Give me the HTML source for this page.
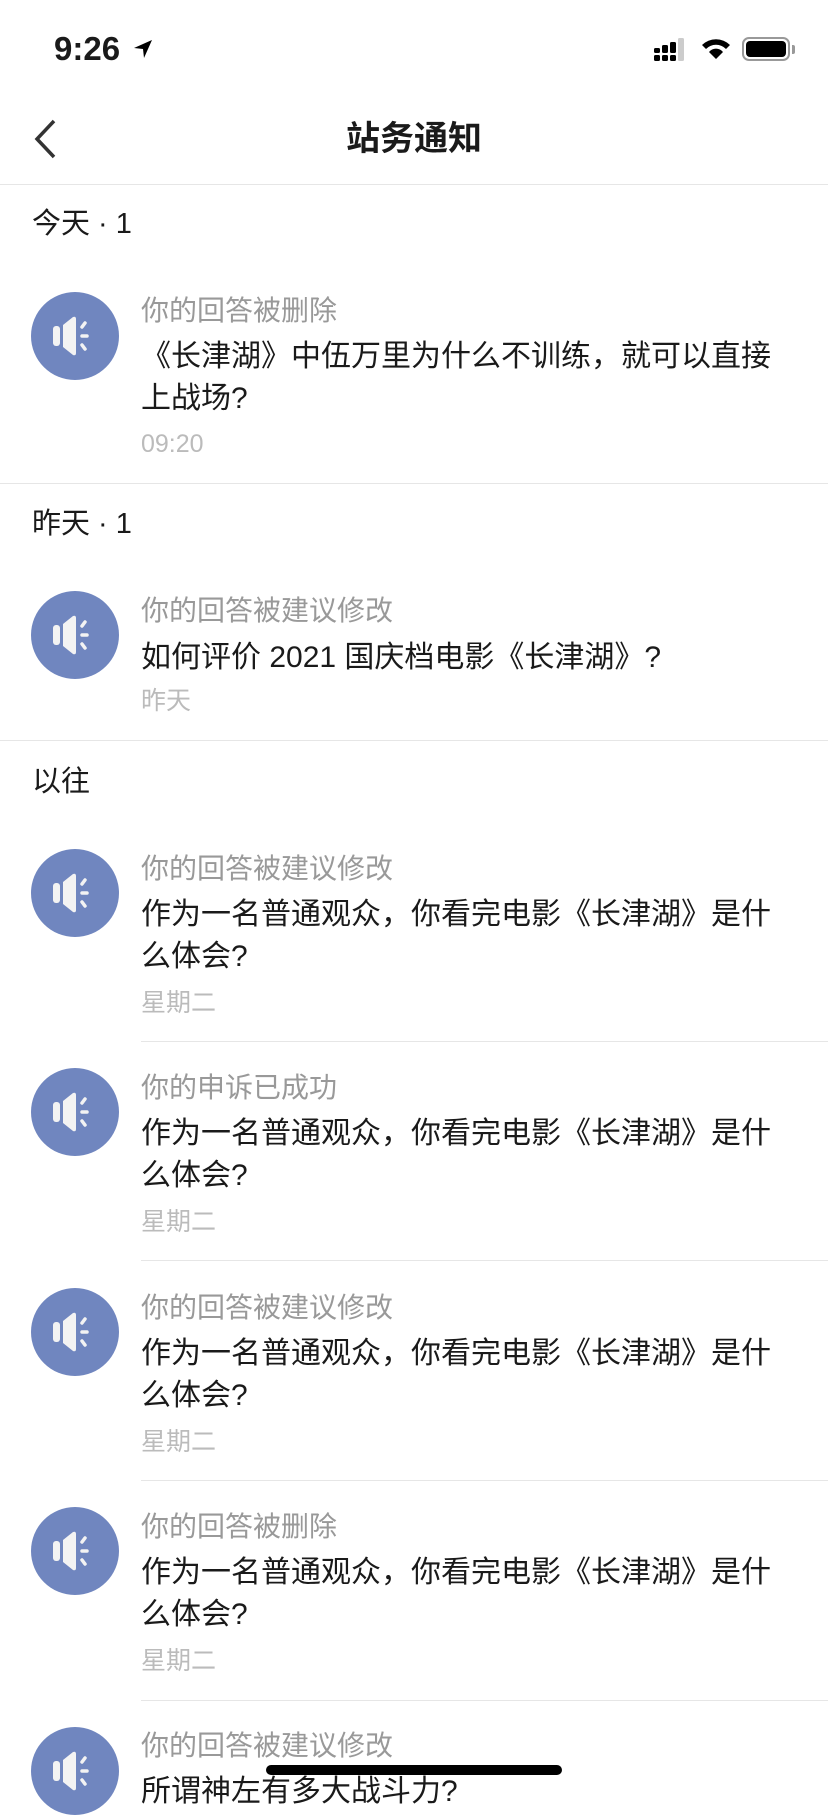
<!DOCTYPE html>
<html><head><meta charset="utf-8"><style>
*{margin:0;padding:0;box-sizing:border-box}
body{width:828px;height:1792px;background:#fff;position:relative;overflow:hidden;font-family:"Liberation Sans","Noto Sans CJK SC",sans-serif;color:#1a1a1a}
.a{position:absolute;white-space:nowrap}
.t{line-height:40px;height:40px}
.g{color:#999;font-size:28px}
.b{font-size:30px;color:#1a1a1a}
.tm{color:#bbb;font-size:25px}
.h{font-size:29px;left:32px}
.sep{position:absolute;height:1px;background:#e6e6e6;right:0}
.av{position:absolute;left:31px;width:88px;height:88px;border-radius:50%;background:#7086bf}
</style></head><body>
<div class="a" style="left:54px;top:28px;font-size:33px;font-weight:bold;line-height:42px">9:26</div>
<svg class="a" style="left:132px;top:38px" width="22" height="22" viewBox="0 0 22 22"><path d="M20 2 L2 10 L11 11 L12 20 Z" fill="#000"/></svg>
<svg class="a" style="left:654px;top:38px" width="34" height="24" viewBox="0 0 34 24"><rect x="0" y="10" width="6" height="5" rx="1.5"/><rect x="0" y="17" width="6" height="6" rx="1.5"/><rect x="8" y="7" width="6" height="8" rx="1.5"/><rect x="8" y="17" width="6" height="6" rx="1.5"/><rect x="16" y="4" width="6" height="11" rx="1.5"/><rect x="16" y="17" width="6" height="6" rx="1.5"/><rect x="24" y="0" width="6" height="23" rx="1.5" fill="#ccc"/></svg>
<svg class="a" style="left:700px;top:37px" width="32" height="24" viewBox="0 0 32 24"><path d="M2 8 A20 20 0 0 1 30 8 L26 12 A14 14 0 0 0 6 12Z M9 15 A9 9 0 0 1 23 15 L16 22Z"/></svg>
<div class="a" style="left:742px;top:37px;width:48px;height:24px;border:2px solid #999;border-radius:7px"></div>
<div class="a" style="left:746px;top:41px;width:40px;height:16px;background:#000;border-radius:4px"></div>
<div class="a" style="left:792px;top:45px;width:3px;height:9px;background:#999;border-radius:0 2px 2px 0"></div>
<svg class="a" style="left:32px;top:118px" width="26" height="42" viewBox="0 0 26 42"><path d="M22 3 L5 21 L22 39" fill="none" stroke="#333" stroke-width="3.5"/></svg>
<div class="a" style="left:0;width:828px;text-align:center;top:117px;font-size:34px;font-weight:bold;line-height:44px">站务通知</div>
<div class="sep" style="left:0;top:184px"></div>

<div class="a t h" style="top:204px">今天 · 1</div>
<div class="av" style="top:292px"><svg width="88" height="88" viewBox="0 0 88 88"><rect x="22" y="34" width="7" height="20" rx="3" fill="#f3f3f3"/><path d="M32 33 L42 25 Q45 24 45 27 L45 61 Q45 64 42 63 L32 55Z" fill="#f3f3f3"/><path d="M51 35 L54 31 M51 44 L56 44 M51 53 L54 57" stroke="#f3f3f3" stroke-width="3.5" stroke-linecap="round"/></svg></div>
<div class="a t g" style="left:141px;top:291px">你的回答被删除</div>
<div class="a t b" style="left:141px;top:337px">《长津湖》中伍万里为什么不训练，就可以直接</div>
<div class="a t b" style="left:141px;top:379px">上战场?</div>
<div class="a t tm" style="left:141px;top:424px">09:20</div>
<div class="sep" style="left:0;top:483px"></div>

<div class="a t h" style="top:504px">昨天 · 1</div>
<div class="av" style="top:591px"><svg width="88" height="88" viewBox="0 0 88 88"><rect x="22" y="34" width="7" height="20" rx="3" fill="#f3f3f3"/><path d="M32 33 L42 25 Q45 24 45 27 L45 61 Q45 64 42 63 L32 55Z" fill="#f3f3f3"/><path d="M51 35 L54 31 M51 44 L56 44 M51 53 L54 57" stroke="#f3f3f3" stroke-width="3.5" stroke-linecap="round"/></svg></div>
<div class="a t g" style="left:141px;top:591px">你的回答被建议修改</div>
<div class="a t b" style="left:141px;top:638px">如何评价 2021 国庆档电影《长津湖》?</div>
<div class="a t tm" style="left:141px;top:681px">昨天</div>
<div class="sep" style="left:0;top:740px"></div>

<div class="a t h" style="top:762px">以往</div>

<div class="av" style="top:849px"><svg width="88" height="88" viewBox="0 0 88 88"><rect x="22" y="34" width="7" height="20" rx="3" fill="#f3f3f3"/><path d="M32 33 L42 25 Q45 24 45 27 L45 61 Q45 64 42 63 L32 55Z" fill="#f3f3f3"/><path d="M51 35 L54 31 M51 44 L56 44 M51 53 L54 57" stroke="#f3f3f3" stroke-width="3.5" stroke-linecap="round"/></svg></div>
<div class="a t g" style="left:141px;top:849px">你的回答被建议修改</div>
<div class="a t b" style="left:141px;top:895px">作为一名普通观众，你看完电影《长津湖》是什</div>
<div class="a t b" style="left:141px;top:937px">么体会?</div>
<div class="a t tm" style="left:141px;top:983px">星期二</div>
<div class="sep" style="left:141px;top:1041px"></div>

<div class="av" style="top:1068px"><svg width="88" height="88" viewBox="0 0 88 88"><rect x="22" y="34" width="7" height="20" rx="3" fill="#f3f3f3"/><path d="M32 33 L42 25 Q45 24 45 27 L45 61 Q45 64 42 63 L32 55Z" fill="#f3f3f3"/><path d="M51 35 L54 31 M51 44 L56 44 M51 53 L54 57" stroke="#f3f3f3" stroke-width="3.5" stroke-linecap="round"/></svg></div>
<div class="a t g" style="left:141px;top:1068px">你的申诉已成功</div>
<div class="a t b" style="left:141px;top:1114px">作为一名普通观众，你看完电影《长津湖》是什</div>
<div class="a t b" style="left:141px;top:1156px">么体会?</div>
<div class="a t tm" style="left:141px;top:1202px">星期二</div>
<div class="sep" style="left:141px;top:1260px"></div>

<div class="av" style="top:1288px"><svg width="88" height="88" viewBox="0 0 88 88"><rect x="22" y="34" width="7" height="20" rx="3" fill="#f3f3f3"/><path d="M32 33 L42 25 Q45 24 45 27 L45 61 Q45 64 42 63 L32 55Z" fill="#f3f3f3"/><path d="M51 35 L54 31 M51 44 L56 44 M51 53 L54 57" stroke="#f3f3f3" stroke-width="3.5" stroke-linecap="round"/></svg></div>
<div class="a t g" style="left:141px;top:1288px">你的回答被建议修改</div>
<div class="a t b" style="left:141px;top:1334px">作为一名普通观众，你看完电影《长津湖》是什</div>
<div class="a t b" style="left:141px;top:1376px">么体会?</div>
<div class="a t tm" style="left:141px;top:1422px">星期二</div>
<div class="sep" style="left:141px;top:1480px"></div>

<div class="av" style="top:1507px"><svg width="88" height="88" viewBox="0 0 88 88"><rect x="22" y="34" width="7" height="20" rx="3" fill="#f3f3f3"/><path d="M32 33 L42 25 Q45 24 45 27 L45 61 Q45 64 42 63 L32 55Z" fill="#f3f3f3"/><path d="M51 35 L54 31 M51 44 L56 44 M51 53 L54 57" stroke="#f3f3f3" stroke-width="3.5" stroke-linecap="round"/></svg></div>
<div class="a t g" style="left:141px;top:1507px">你的回答被删除</div>
<div class="a t b" style="left:141px;top:1553px">作为一名普通观众，你看完电影《长津湖》是什</div>
<div class="a t b" style="left:141px;top:1595px">么体会?</div>
<div class="a t tm" style="left:141px;top:1641px">星期二</div>
<div class="sep" style="left:141px;top:1700px"></div>

<div class="av" style="top:1727px"><svg width="88" height="88" viewBox="0 0 88 88"><rect x="22" y="34" width="7" height="20" rx="3" fill="#f3f3f3"/><path d="M32 33 L42 25 Q45 24 45 27 L45 61 Q45 64 42 63 L32 55Z" fill="#f3f3f3"/><path d="M51 35 L54 31 M51 44 L56 44 M51 53 L54 57" stroke="#f3f3f3" stroke-width="3.5" stroke-linecap="round"/></svg></div>
<div class="a t g" style="left:141px;top:1726px">你的回答被建议修改</div>
<div class="a t b" style="left:141px;top:1772px">所谓神左有多大战斗力?</div>
<div class="a" style="left:266px;top:1765px;width:296px;height:10px;border-radius:5px;background:#000"></div>
</body></html>
